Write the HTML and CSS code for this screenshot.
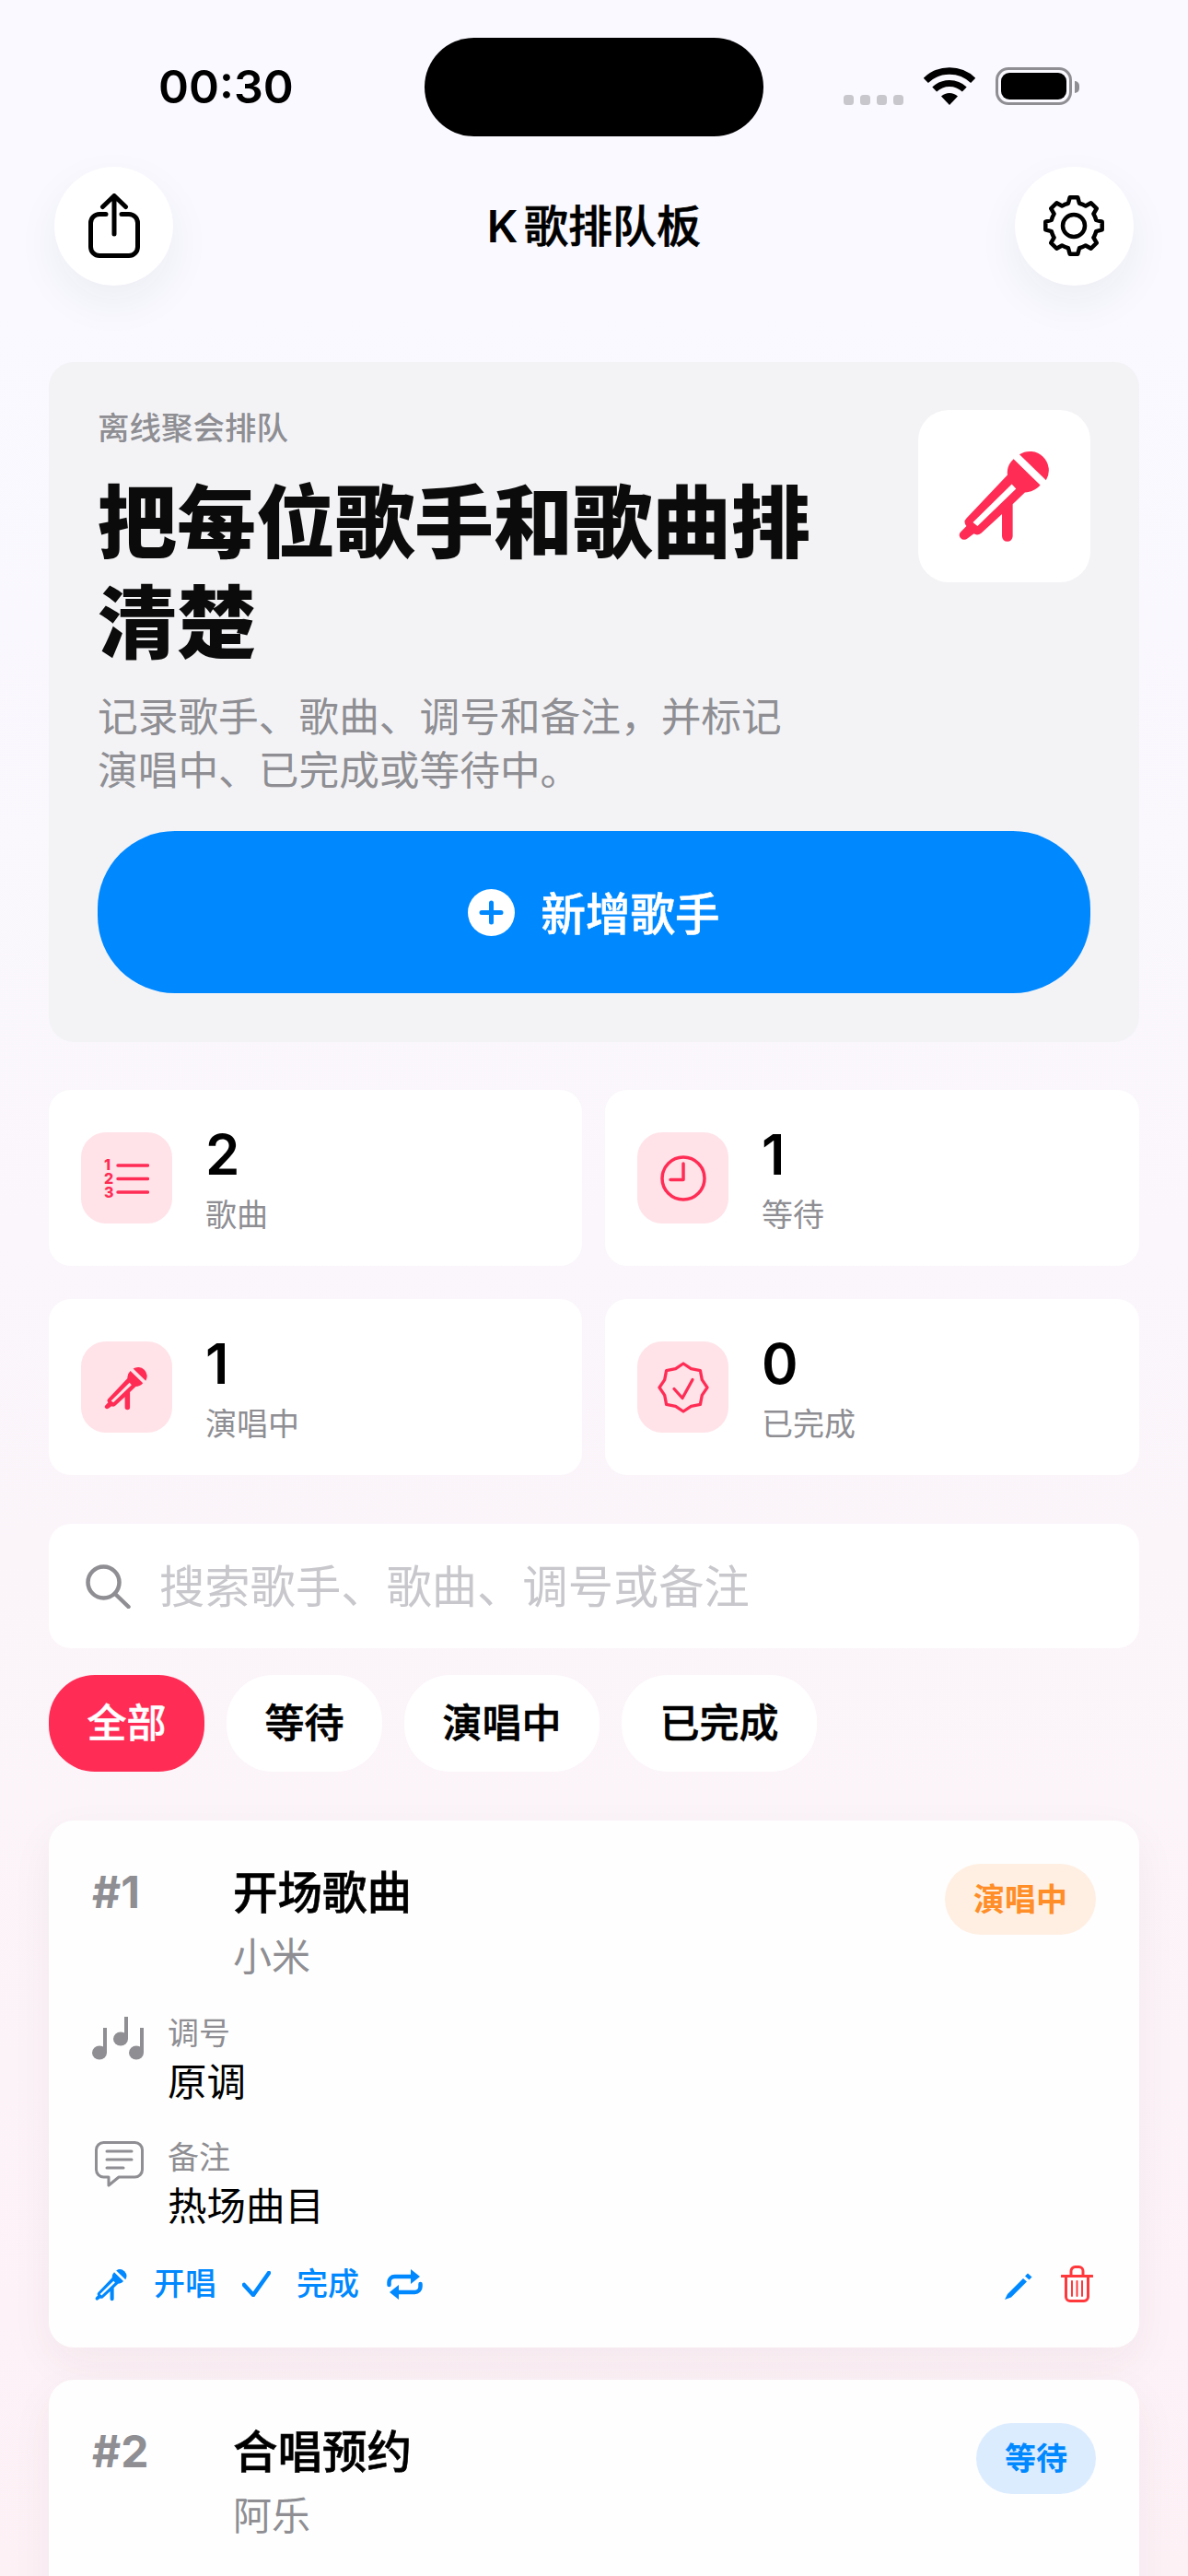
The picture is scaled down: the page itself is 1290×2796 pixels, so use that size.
FILE: index.html
```html
<!DOCTYPE html>
<html lang="zh-CN">
<head>
<meta charset="utf-8">
<title>K歌排队板</title>
<link rel="stylesheet" href="styles.css">
</head>
<body>
<svg class="defs" aria-hidden="true">
  <symbol id="mic" viewBox="236 200 312 316">
    <path d="M437 228A62 62 0 0 1 524 312Z"/>
    <path fill-rule="evenodd" d="M418 243L505 328C490 345 475 350 455 352L415 390V495A17 17 0 0 1 380 495V423L312 485Q300 494 288 487L268 502Q255 512 244 500Q236 490 246 480L264 462Q252 448 264 436L398 295Q394 265 418 243ZM412 325L285 450L300 462L426 340Z"/>
  </symbol>
</svg>
<div class="page">
  <div class="status">
    <div class="status-left"><span class="time">00:30</span></div>
    <div class="island"></div>
    <div class="status-right">
      <div class="signal"><i></i><i></i><i></i><i></i></div>
      <svg class="wifi" viewBox="0 0 56 41"><path d="M28 41L19 31.6A13 13 0 0 1 37 31.6Z"/><path class="arc" stroke-width="7" d="M11.7 24.1A23.5 23.5 0 0 1 44.3 24.1"/><path class="arc" stroke-width="7.5" d="M2.3 14.4A37 37 0 0 1 53.7 14.4"/></svg>
      <div class="battery"><div class="battery-fill"></div></div>
      <div class="battery-cap"></div>
    </div>
  </div>
  <div class="nav">
    <button class="round-btn">
      <svg class="ico-share" viewBox="0 0 56 70"><path d="M19 22.5H12a9.5 9.5 0 0 0-9.500 9.500V58a9.500 9.500 0 0 0 9.500 9.500H44a9.500 9.500 0 0 0 9.500-9.500V32a9.500 9.500 0 0 0-9.500-9.500H36M28 3V44M15.500 14.500L28 2.500L40.500 14.500"/></svg>
    </button>
    <div class="nav-title"><span class="k">K</span>歌排队板</div>
    <button class="round-btn">
      <svg class="ico-gear" viewBox="-33 -33 66 66"><path d="M-6.050-24.260L-4.310-30.700H4.310L6.050-24.260A25 25 0 0 1 12.880-21.430L18.660-24.760L24.760-18.660L21.430-12.880A25 25 0 0 1 24.260-6.050L30.700-4.310V4.310L24.260 6.050A25 25 0 0 1 21.430 12.880L24.760 18.660L18.660 24.760L12.880 21.430A25 25 0 0 1 6.050 24.260L4.310 30.700H-4.310L-6.050 24.260A25 25 0 0 1-12.880 21.430L-18.660 24.760L-24.760 18.660L-21.430 12.880A25 25 0 0 1-24.260 6.050L-30.700 4.310V-4.310L-24.260-6.050A25 25 0 0 1-21.430-12.880L-24.760-18.660L-18.660-24.760L-12.880-21.430A25 25 0 0 1-6.050-24.260Z"/><circle r="12"/></svg>
    </button>
  </div>
  <main class="main">
    <section class="hero">
      <div class="hero-top">
        <div class="hero-text">
          <div class="hero-label">离线聚会排队</div>
          <h1 class="hero-title">把每位歌手和歌曲排清楚</h1>
          <p class="hero-desc">记录歌手、歌曲、调号和备注，并标记演唱中、已完成或等待中。</p>
        </div>
        <div class="hero-tile"><svg class="mic-lg"><use href="#mic"/></svg></div>
      </div>
      <button class="add-btn">
        <svg class="ico-plus" viewBox="0 0 51 51"><circle cx="25.500" cy="25.500" r="25.500"/><path d="M25.500 15V36M15 25.500H36"/></svg>
        <span>新增歌手</span>
      </button>
    </section>

    <section class="stats">
      <div class="stat">
        <div class="stat-icon">
          <svg class="ico-list" viewBox="0 -8 49 58"><text class="list-num" x="0" y="12">1</text><text class="list-num" x="0" y="27">2</text><text class="list-num" x="0" y="42">3</text><path d="M15 7H47.500M15 21.500H47.500M15 36H47.500"/></svg>
        </div>
        <div class="stat-body"><div class="stat-num">2</div><div class="stat-label">歌曲</div></div>
      </div>
      <div class="stat">
        <div class="stat-icon">
          <svg class="ico-clock" viewBox="0 0 50 50"><circle cx="25" cy="25" r="23"/><path d="M25 9V26.500H11"/></svg>
        </div>
        <div class="stat-body"><div class="stat-num">1</div><div class="stat-label">等待</div></div>
      </div>
      <div class="stat">
        <div class="stat-icon"><svg class="mic-md"><use href="#mic"/></svg></div>
        <div class="stat-body"><div class="stat-num">1</div><div class="stat-label">演唱中</div></div>
      </div>
      <div class="stat">
        <div class="stat-icon">
          <svg class="ico-seal" viewBox="-28 -28 56 56"><path d="M0-26L8.400-20.300L18.400-18.400L20.300-8.400L26 0L20.300 8.400L18.400 18.400L8.400 20.300L0 26L-8.400 20.300L-18.400 18.400L-20.300 8.400L-26 0L-20.300-8.400L-18.400-18.400L-8.400-20.300Z"/><path d="M-10 1.500L-1 11.500L10-8.500"/></svg>
        </div>
        <div class="stat-body"><div class="stat-num">0</div><div class="stat-label">已完成</div></div>
      </div>
    </section>

    <div class="search">
      <svg class="ico-search" viewBox="0 0 49 48"><circle cx="19.500" cy="19.500" r="17"/><path d="M32 32L46.500 46"/></svg>
      <span class="search-text">搜索歌手、歌曲、调号或备注</span>
    </div>

    <div class="chips">
      <div class="chip chip-on">全部</div>
      <div class="chip">等待</div>
      <div class="chip">演唱中</div>
      <div class="chip">已完成</div>
    </div>

    <article class="song">
      <div class="song-head">
        <div class="song-no">#1</div>
        <div class="song-main">
          <div class="song-title">开场歌曲</div>
          <div class="song-singer">小米</div>
        </div>
        <div class="badge badge-live">演唱中</div>
      </div>
      <div class="info">
        <svg class="ico-notes" viewBox="0 0 58 48"><ellipse cx="8" cy="40" rx="8" ry="7.500"/><ellipse cx="31" cy="25" rx="8" ry="7.500"/><ellipse cx="48" cy="40" rx="8" ry="7.500"/><path class="stem" d="M14 13V40M37 1V25M54 13V40"/></svg>
        <div><div class="info-label">调号</div><div class="info-value">原调</div></div>
      </div>
      <div class="info">
        <svg class="ico-note" viewBox="0 0 53 50"><path d="M9.500 1.500H43.500a8 8 0 0 1 8 8V31a8 8 0 0 1-8 8H26L15 48V39H9.500a8 8 0 0 1-8-8V9.500a8 8 0 0 1 8-8Z"/><path d="M13 11H40M13 20H40M13 29H31"/></svg>
        <div><div class="info-label">备注</div><div class="info-value">热场曲目</div></div>
      </div>
      <div class="actions">
        <div class="actions-left">
          <svg class="mic-sm"><use href="#mic"/></svg>
          <span class="action-text">开唱</span>
          <svg class="ico-check" viewBox="0 0 31 28"><path d="M2 15L12 26L29 2"/></svg>
          <span class="action-text">完成</span>
          <svg class="ico-repeat" viewBox="0 0 39 33"><path d="M2.500 17V14a6 6 0 0 1 6-6H28M36.500 16V19a6 6 0 0 1-6 6H11"/><path class="solid" d="M26 0L36 8L26 16ZM13 17L3 25L13 33Z"/></svg>
        </div>
        <div class="actions-right">
          <svg class="ico-pencil" viewBox="0 0 30 29"><path d="M0 29L3 23L20 6L24 9.500L7 26.500ZM22 3.500L25 0.500L29.500 4.500L26.500 7.500Z"/></svg>
          <svg class="ico-trash" viewBox="0 0 35 40"><path d="M1 11.500H34M11 11V6a4.500 4.500 0 0 1 4.500-4.500H19.500A4.500 4.500 0 0 1 24 6V11M5.500 12V34a4.500 4.500 0 0 0 4.500 4.500H25a4.500 4.500 0 0 0 4.500-4.500V12"/><path class="thin" d="M12 17V33M17.500 17V33M23 17V33"/></svg>
        </div>
      </div>
    </article>

    <article class="song">
      <div class="song-head">
        <div class="song-no">#2</div>
        <div class="song-main">
          <div class="song-title">合唱预约</div>
          <div class="song-singer">阿乐</div>
        </div>
        <div class="badge badge-wait">等待</div>
      </div>
      <div class="info">
        <svg class="ico-notes" viewBox="0 0 58 48"><ellipse cx="8" cy="40" rx="8" ry="7.500"/><ellipse cx="31" cy="25" rx="8" ry="7.500"/><ellipse cx="48" cy="40" rx="8" ry="7.500"/><path class="stem" d="M14 13V40M37 1V25M54 13V40"/></svg>
      </div>
    </article>
  </main>
</div>
</body>
</html>
```

FILE: styles.css
```css
* { box-sizing: border-box; }
html, body { margin: 0; padding: 0; }
body {
  font-family: Inter, "Noto Sans CJK SC", sans-serif;
  color: #000;
  overflow: hidden;
  height: 2796px;
}
.defs { width: 0; height: 0; display: block; }
.page {
  height: 2796px;
  overflow: hidden;
  background: linear-gradient(180deg, #f9f9ff 0%, #f9f9ff 12%, #fbf5fa 60%, #fdf1f6 100%);
}

/* status bar */
.status {
  display: grid;
  grid-template-columns: 461px 368px 461px;
  height: 181px;
  padding-top: 41px;
}
.status-left { padding: 29px 0 0 172px; }
.time { display: block; font-size: 50px; line-height: 48px; font-weight: 600; }
.island { height: 107px; background: #000; border-radius: 53.500px; }
.status-right { display: flex; align-items: flex-start; padding: 32px 0 0 87px; }
.signal { display: flex; gap: 7px; margin-top: 30px; }
.signal i { display: block; width: 11px; height: 11px; border-radius: 3.500px; background: #c7c7cc; }
.wifi { width: 56px; height: 41px; margin-left: 22px; fill: #000; }
.wifi .arc { fill: none; stroke: #000; }
.battery {
  width: 83px; height: 41px; margin-left: 22px;
  border: 3.500px solid #8e8e93; border-radius: 14px;
  padding: 2.500px 3px;
}
.battery-fill { height: 29px; background: #000; border-radius: 9px; }
.battery-cap { width: 5px; height: 13px; margin: 15px 0 0 3px; background: #8e8e93; border-radius: 0 5px 5px 0; }

/* nav */
.nav {
  display: flex; justify-content: space-between; align-items: center;
  height: 129px; padding: 0 59px;
}
.round-btn {
  width: 129px; height: 129px; padding: 0; border: 0; border-radius: 50%;
  background: #fff; display: flex; align-items: center; justify-content: center;
  box-shadow: 0 18px 48px rgba(40, 40, 70, .06);
}
.ico-share { width: 56px; height: 70px; margin-top: -1px; fill: none; stroke: #000; stroke-width: 5; stroke-linecap: round; stroke-linejoin: round; }
.ico-gear { width: 66px; height: 66px; margin-top: -2px; fill: none; stroke: #000; stroke-width: 4.500; stroke-linejoin: round; }
.nav-title { font-size: 48px; line-height: 60px; font-weight: 500; -webkit-text-stroke: .6px #000; }
.k { margin-right: 6.500px; font-weight: 600; -webkit-text-stroke: 0; }

/* main column */
.main { padding: 83px 53px 0; }

/* hero */
.hero {
  background: #f3f3f6; border-radius: 27px;
  padding: 52px 53px 53px;
}
.hero-top { display: flex; justify-content: space-between; align-items: flex-start; }
.hero-text { width: 786px; }
.hero-label { font-size: 34.500px; line-height: 40px; font-weight: 500; color: #8e8e93; }
.hero-title { margin: 29px 0 0; font-size: 86px; line-height: 109px; font-weight: 900; color: #0b0b0b; }
.hero-desc { margin: 18px 0 0; font-size: 43.700px; line-height: 58px; color: #8e8e93; }
.hero-tile {
  width: 187px; height: 187px; border-radius: 33px; background: #fff;
  display: flex; align-items: center; justify-content: center;
}
.mic-lg { width: 104px; height: 105px; fill: #ff2d55; margin: -4px 0 0 2px; }
.add-btn {
  display: flex; align-items: center; justify-content: center; gap: 28px;
  width: 100%; height: 176px; margin-top: 36px; padding: 0 0 2px; border: 0;
  border-radius: 84px; background: #0088ff; color: #fff;
  font-family: inherit; font-size: 48.500px; font-weight: 500; -webkit-text-stroke: .6px #fff;
}
.ico-plus { width: 51px; height: 51px; margin-top: 2px; }
.ico-plus circle { fill: #fff; }
.ico-plus path { fill: none; stroke: #0088ff; stroke-width: 5; stroke-linecap: round; }

/* stats */
.stats {
  display: grid; grid-template-columns: 579px 580px; column-gap: 25px; row-gap: 36px;
  margin-top: 52px;
}
.stat {
  display: flex; align-items: center; gap: 36px;
  height: 191px; padding: 0 35px; background: #fff; border-radius: 24px;
}
.stat-icon {
  width: 99px; height: 99px; flex: none; border-radius: 27px; background: #ffe3e9;
  display: flex; align-items: center; justify-content: center;
}
.stat-num { font-size: 60px; line-height: 72px; font-weight: 600; }
.stat-label { font-size: 34px; line-height: 42px; color: #8e8e93; margin-top: 9px; }
.ico-list { width: 49px; height: 58px; }
.ico-list path { fill: none; stroke: #ff2d55; stroke-width: 3.500; stroke-linecap: round; }
.list-num { font-size: 16px; font-weight: 800; fill: #ff2d55; }
.ico-clock { width: 50px; height: 50px; fill: none; stroke: #ff2d55; stroke-width: 3.500; stroke-linecap: round; stroke-linejoin: round; }
.mic-md { width: 49px; height: 50px; fill: #ff2d55; }
.ico-seal { width: 56px; height: 56px; fill: none; stroke: #ff2d55; stroke-width: 3.300; stroke-linecap: round; stroke-linejoin: round; }

/* search */
.search {
  display: flex; align-items: center; gap: 31px;
  height: 135px; margin-top: 53px; padding: 0 40px; background: #fff; border-radius: 24px;
}
.ico-search { width: 49px; height: 48px; flex: none; fill: none; stroke: #8e8e93; stroke-width: 4.500; stroke-linecap: round; }
.search-text { font-size: 49.300px; line-height: 60px; color: #c7c7cc; }

/* chips */
.chips { display: flex; gap: 24px; margin-top: 29px; }
.chip {
  height: 105px; padding: 0 41.500px; border-radius: 50px; background: #fff;
  font-size: 43px; line-height: 105px; font-weight: 500; -webkit-text-stroke: .6px #000;
}
.chip-on { background: #ff2d55; color: #fff; -webkit-text-stroke: .4px #fff; }

/* song cards */
.song {
  margin-top: 53px; padding: 47px 47px 48px; height: 572px;
  background: #fefefe; border-radius: 27px;
  box-shadow: 0 16px 48px rgba(70, 30, 50, .05);
}
.song + .song { margin-top: 35px; }
.song-head { display: flex; align-items: flex-start; }
.song-no { width: 153px; flex: none; font-size: 48px; line-height: 60px; font-weight: 700; color: #8e8e93; margin-top: 1px; }
.song-main { flex: 1; padding-bottom: 1px; }
.song-title { font-size: 48.500px; line-height: 60px; font-weight: 500; margin-top: 2px; -webkit-text-stroke: .6px #000; }
.song-singer { font-size: 42px; line-height: 54px; margin-top: 12px; color: #8e8e93; }
.badge { height: 77px; padding: 0 31px; border-radius: 38.500px; font-size: 34px; line-height: 77px; font-weight: 700; }
.badge-live { background: #ffefe2; color: #ff8d28; }
.badge-wait { background: #dcecff; color: #0088ff; }
.info { display: flex; align-items: flex-start; margin-top: 35px; }
.info-label { font-size: 34px; line-height: 40px; color: #8e8e93; }
.info-value { font-size: 42.500px; line-height: 54px; margin-top: 6px; }
.ico-notes { width: 58px; height: 48px; margin: 1px 24px 0 0; fill: #8e8e93; flex: none; }
.ico-notes .stem { fill: none; stroke: #8e8e93; stroke-width: 4; }
.ico-note { width: 53px; height: 50px; margin: 2px 26px 0 3px; flex: none; fill: none; stroke: #8e8e93; stroke-width: 3; stroke-linejoin: round; stroke-linecap: round; }

/* actions */
.actions { display: flex; justify-content: space-between; align-items: center; height: 40px; margin-top: 37px; padding: 0 3px; }
.actions-left { display: flex; align-items: center; gap: 28px; }
.actions-right { display: flex; align-items: center; gap: 31px; }
.action-text { font-size: 34px; line-height: 40px; font-weight: 500; color: #0088ff; }
.mic-sm { width: 36px; height: 37px; fill: #0088ff; }
.ico-check { width: 31px; height: 28px; fill: none; stroke: #0088ff; stroke-width: 4.500; stroke-linecap: round; stroke-linejoin: round; }
.ico-repeat { width: 39px; height: 33px; margin-left: 2px; fill: none; stroke: #0088ff; stroke-width: 4.500; stroke-linecap: round; }
.ico-repeat .solid { fill: #0088ff; stroke: none; }
.ico-pencil { width: 30px; height: 29px; fill: #0088ff; margin-top: 4px; }
.ico-trash { width: 35px; height: 40px; fill: none; stroke: #ff383c; stroke-width: 3; stroke-linecap: round; stroke-linejoin: round; }
.ico-trash .thin { stroke-width: 2; }
```
